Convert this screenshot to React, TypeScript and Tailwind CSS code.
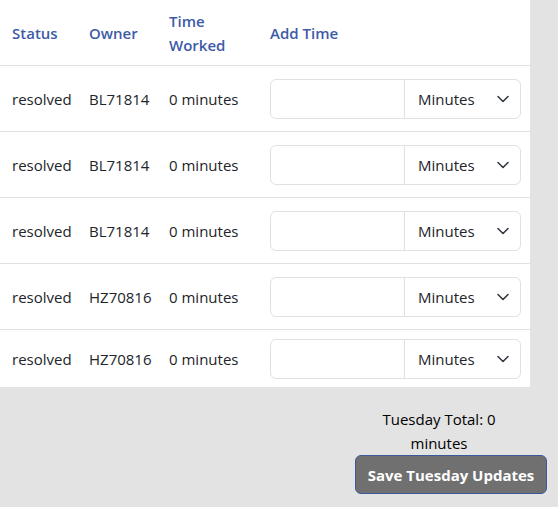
const rows = [
  { status: "resolved", owner: "BL71814", worked: "0 minutes" },
  { status: "resolved", owner: "BL71814", worked: "0 minutes" },
  { status: "resolved", owner: "BL71814", worked: "0 minutes" },
  { status: "resolved", owner: "HZ70816", worked: "0 minutes" },
  { status: "resolved", owner: "HZ70816", worked: "0 minutes" },
];

const Chevron = () => (
  <svg
    viewBox="0 0 12 7"
    className="w-3 h-[7px] absolute right-[11px] top-1/2 -translate-y-1/2 pointer-events-none overflow-visible"
    fill="none"
    stroke="#343a40"
    strokeWidth="1.6"
    strokeLinecap="round"
    strokeLinejoin="round"
  >
    <path d="M1 1l5 5 5-5" />
  </svg>
);

const TimeInput = () => (
  <div className="flex w-[251px] h-10 border border-[#dee2e6] rounded-md bg-white">
    <input
      type="text"
      className="w-[133px] h-full px-3 outline-none bg-transparent rounded-l-md"
    />
    <div className="relative flex-1 h-full border-l border-[#dee2e6] flex items-center pl-[13px] pt-[2px] text-[#212529]">
      Minutes
      <Chevron />
    </div>
  </div>
);

export default function App() {
  return (
    <div
      className="w-[558px] h-[507px] bg-[#e3e3e3] text-[15px] text-[#212529] overflow-hidden"
      style={{ fontFamily: '"Open Sans", "Noto Sans", sans-serif' }}
    >
      <div className="w-[530px] bg-white">
        <div className="grid grid-cols-[77px_80px_101px_272px] h-[66px] items-center border-b border-[#dee2e6] font-semibold text-[#3d5ba7] leading-6">
          <div className="pl-3">Status</div>
          <div className="pl-3">Owner</div>
          <div className="pl-3">
            Time
            <br />
            Worked
          </div>
          <div className="pl-3">Add Time</div>
        </div>
        {rows.map((row, i) => (
          <div
            key={i}
            className={`grid grid-cols-[77px_80px_101px_272px] items-center ${
              i === rows.length - 1 ? "h-[57px]" : "h-[66px] border-b border-[#dee2e6]"
            }`}
          >
            <div className="pl-3 pt-[2px]">{row.status}</div>
            <div className="pl-3 pt-[2px]">{row.owner}</div>
            <div className="pl-3 pt-[2px]">{row.worked}</div>
            <div className="pl-3">
              <TimeInput />
            </div>
          </div>
        ))}
      </div>

      <div className="flex flex-col items-end pt-5 pr-[11px]">
        <div className="w-[130px] mr-[43px] text-center leading-6 text-black">
          Tuesday Total: 0 minutes
        </div>
        <button className="w-[192px] h-[39px] rounded-md bg-[#707070] border border-[#3a5aa0] text-white font-bold text-[15px] pt-[1px]">
          Save Tuesday Updates
        </button>
      </div>
    </div>
  );
}
